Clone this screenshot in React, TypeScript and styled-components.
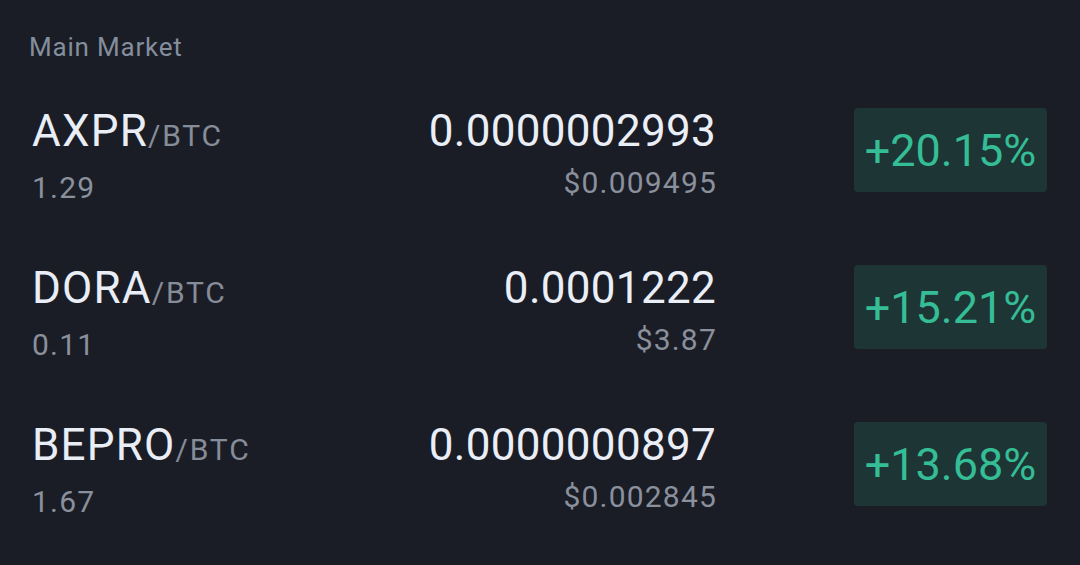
import React from 'react';
import styled, { createGlobalStyle } from 'styled-components';

const GlobalStyle = createGlobalStyle`
  html, body {
    margin: 0;
    padding: 0;
    background: #1a1d26;
  }
  body {
    font-family: Roboto, "Liberation Sans", sans-serif;
  }
`;

const Page = styled.div`
  width: 1080px;
  height: 565px;
  background: #1a1d26;
  padding: 32px 33px 0 32px;
  box-sizing: border-box;
  overflow: hidden;
`;

const Title = styled.div`
  font-size: 26px;
  line-height: 30px;
  letter-spacing: 0.8px;
  color: #848e9c;
  margin-left: -3px;
  margin-bottom: 9px;
`;

const Row = styled.div`
  display: flex;
  align-items: flex-start;
  height: 157px;
`;

const Pair = styled.div`
  flex: 1;
  padding-top: 35px;
`;

const Symbol = styled.div`
  font-size: 44px;
  line-height: 50px;
  letter-spacing: 1.2px;
  color: #e9edf6;
  white-space: nowrap;
`;

const Quote = styled.span`
  font-size: 30px;
  letter-spacing: 1.8px;
  color: #868c98;
`;

const SubText = styled.div`
  margin-top: 9px;
  font-size: 30px;
  line-height: 36px;
  letter-spacing: 1.2px;
  color: #8a909c;
`;

const Prices = styled.div`
  padding-top: 35px;
  margin-right: -1px;
  text-align: right;
`;

const Price = styled.div`
  font-size: 44px;
  line-height: 50px;
  letter-spacing: 0.3px;
  color: #eaeef6;
`;

const UsdText = styled(SubText)`
  margin-right: -1px;
`;

const Change = styled.div<{ $up: boolean }>`
  margin-top: 37px;
  margin-left: 139px;
  width: 193px;
  height: 84px;
  border-radius: 4px;
  background: ${(p) => (p.$up ? '#1d3635' : '#3a1f27')};
  color: ${(p) => (p.$up ? '#35bd95' : '#f6465d')};
  font-size: 45px;
  display: flex;
  align-items: center;
  justify-content: center;
`;

type Market = {
  base: string;
  quote: string;
  volume: string;
  price: string;
  usd: string;
  change: number;
};

const markets: Market[] = [
  { base: 'AXPR', quote: 'BTC', volume: '1.29', price: '0.0000002993', usd: '$0.009495', change: 20.15 },
  { base: 'DORA', quote: 'BTC', volume: '0.11', price: '0.0001222', usd: '$3.87', change: 15.21 },
  { base: 'BEPRO', quote: 'BTC', volume: '1.67', price: '0.0000000897', usd: '$0.002845', change: 13.68 },
];

const App: React.FC = () => {
  return (
    <>
      <GlobalStyle />
      <Page>
        <Title>Main Market</Title>
        {markets.map((m) => (
          <Row key={m.base}>
            <Pair>
              <Symbol>
                {m.base}
                <Quote>/{m.quote}</Quote>
              </Symbol>
              <SubText>{m.volume}</SubText>
            </Pair>
            <Prices>
              <Price>{m.price}</Price>
              <UsdText>{m.usd}</UsdText>
            </Prices>
            <Change $up={m.change >= 0}>
              {m.change >= 0 ? '+' : ''}
              {m.change.toFixed(2)}%
            </Change>
          </Row>
        ))}
      </Page>
    </>
  );
};

export default App;
